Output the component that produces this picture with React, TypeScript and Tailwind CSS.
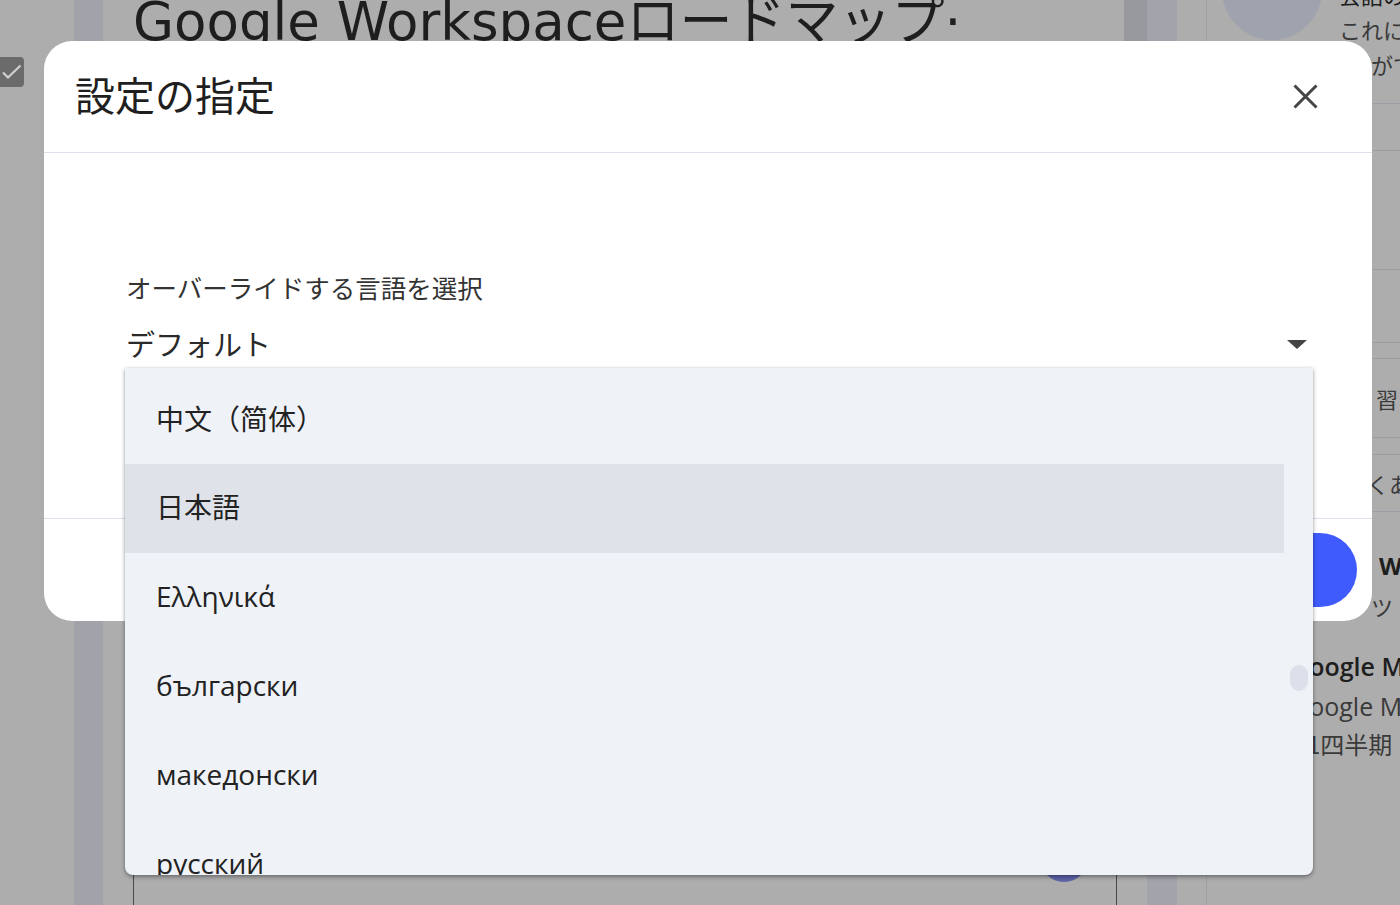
import React from "react";

const jp = "font-['Noto_Sans_CJK_JP','Noto_Sans',sans-serif]";
const item = "font-['Open_Sans','Noto_Sans_CJK_JP',sans-serif]";

const languages = [
  { label: "中文（简体）", sc: true },
  { label: "日本語", active: true },
  { label: "Ελληνικά" },
  { label: "български" },
  { label: "македонски" },
  { label: "русский" },
];

function Backdrop() {
  return (
    <div className="flex h-full w-full bg-[#adadad]">
      {/* checkbox column */}
      <div className="w-[74px] shrink-0">
        <div className="mt-[57px] flex h-[30px] w-[24px] items-center justify-end rounded-r-[4px] bg-[#6b6b6b] pr-[2px]">
          <svg width="20" height="20" viewBox="0 0 20 20" fill="none">
            <path d="M1 10.5l5 5L18.5 3.5" stroke="#cfcfcf" strokeWidth="2.2" />
          </svg>
        </div>
      </div>
      <div className="w-[29px] shrink-0 bg-[#a2a2aa]" />
      <div className="w-[30px] shrink-0" />
      {/* main column */}
      <div className="flex w-[984px] shrink-0 flex-col">
        <div className="mt-[-13px] whitespace-nowrap font-['DejaVu_Sans','Noto_Sans_CJK_JP',sans-serif] text-[53px] font-normal leading-[70px] text-[#1e1e1e]">
          Google Workspaceロードマップ·
        </div>
        <div className="mt-auto h-[180px] border-x border-[#4a4a4a]">
          <div className="ml-[906px] mt-[109px] h-[48px] w-[48px] rounded-full bg-[#5c63a8]" />
        </div>
      </div>
      <div className="w-[7px] shrink-0" />
      <div className="flex w-[23px] shrink-0 flex-col">
        <div className="h-[41px] bg-[#98989f]" />
      </div>
      <div className="w-[30px] shrink-0 bg-[#a3a3ab]" />
      {/* right panel */}
      <div className="flex min-w-0 flex-1">
        <div className="w-[30px] shrink-0 border-r border-[#9f9fa6]" />
        <div className={`flex min-w-0 flex-1 flex-col ${jp} text-[#3a3a3a]`}>
          <div className="flex h-[103px] shrink-0 gap-[17px] pl-[15px]">
            <div className="mt-[-60px] h-[100px] w-[100px] shrink-0 rounded-full bg-[#9fa3ad]" />
            <div className="mt-[-23px] whitespace-nowrap text-[22px] leading-[35px]">
              <div className="text-[#1e1e1e]">会話の</div>
              <div>これに</div>
              <div className="pl-[32px]">がで</div>
            </div>
          </div>
          <div className="h-[48px] shrink-0 border-y border-[#9d9da5]" />
          <div className="h-[119px] shrink-0 border-b border-[#9d9da5]" />
          <div className="h-[73px] shrink-0 border-b border-[#9d9da5]" />
          <div className="h-[16px] shrink-0 border-b border-[#9d9da5]" />
          <div className="flex h-[79px] shrink-0 items-center justify-end border-b border-[#9d9da5] pr-[2px] text-[22px]">
            習
          </div>
          <div className="h-[17px] shrink-0 border-b border-[#9d9da5]" />
          <div className="flex h-[57px] shrink-0 items-center border-b border-[#9d9da5] pl-[160px] text-[22px] whitespace-nowrap">
            くあ
          </div>
          <div className="mt-[38px] whitespace-nowrap pl-[172px] font-['Open_Sans',sans-serif] text-[24px] font-bold leading-[32px] text-[#1e1e1e]">
            W
          </div>
          <div className="mt-[4px] whitespace-nowrap pl-[164px] text-[22px] leading-[40px]">ツ</div>
          <div className="mt-[21px] whitespace-nowrap pl-[84px] font-['Open_Sans',sans-serif] text-[25px] font-semibold leading-[38px] text-[#1e1e1e]">
            Google Meet
          </div>
          <div className="mt-[2px] whitespace-nowrap pl-[84px] font-['Open_Sans',sans-serif] text-[25px] leading-[38px]">
            Google Meet
          </div>
          <div className="whitespace-nowrap pl-[76px] text-[24px] leading-[38px]">第1四半期</div>
        </div>
      </div>
    </div>
  );
}

function Dialog() {
  return (
    <div className="absolute left-[44px] top-[41px] flex h-[580px] w-[1328px] flex-col rounded-[28px] bg-white">
      <div className="flex h-[112px] shrink-0 items-center justify-between border-b border-[#dde1ec] pl-[31px] pr-[54px]">
        <div className={`${jp} mt-[-5px] text-[40px] leading-none text-[#1f1f1f]`}>設定の指定</div>
        <svg width="25" height="25" viewBox="0 0 25 25" fill="none">
          <path d="M1.5 1.5l22 22M23.5 1.5l-22 22" stroke="#454545" strokeWidth="3" />
        </svg>
      </div>
      <div className="flex flex-1 flex-col pl-[82px] pr-[66px] pt-[118px]">
        <div className={`${jp} text-[25.5px] leading-[32px] text-[#333]`}>オーバーライドする言語を選択</div>
        <div className="mt-[22px] flex items-center justify-between">
          <div className={`${jp} text-[29px] leading-[36px] text-[#2a2a2a]`}>デフォルト</div>
          <svg width="20" height="9" viewBox="0 0 20 9" className="mr-[-1px] mt-[2px]">
            <path d="M0 0h20L10 9z" fill="#444" />
          </svg>
        </div>
      </div>
      <div className="flex h-[103px] shrink-0 items-center justify-end border-t border-[#dde1ec] pr-[15px]">
        <div className="h-[74px] w-[160px] rounded-full bg-[#3f5bfd]" />
      </div>
    </div>
  );
}

function Menu() {
  return (
    <div className="absolute left-[125px] top-[368px] flex h-[507px] w-[1188px] overflow-hidden rounded-b-[8px] bg-[#eff2f7] shadow-[0_2px_4px_rgba(0,0,0,0.35),0_0_3px_rgba(0,0,0,0.12)]">
      <div className="flex w-[1159px] flex-col pt-[7px]">
        {languages.map((l) => (
          <div
            key={l.label}
            className={`flex h-[89px] shrink-0 items-center pb-[3px] pl-[31px] text-[28px] text-[#222] ${
              l.sc ? "font-['Noto_Sans_CJK_SC',sans-serif]" : item
            } ${l.active ? "bg-[#dfe2e8]" : ""}`}
          >
            {l.label}
          </div>
        ))}
      </div>
      <div className="flex flex-1 flex-col items-center pt-[297px]">
        <div className="h-[26px] w-[18px] rounded-[9px] bg-[#dce0ea]" />
      </div>
    </div>
  );
}

export default function App() {
  return (
    <div className="relative h-[905px] w-[1400px] overflow-hidden">
      <Backdrop />
      <Dialog />
      <Menu />
    </div>
  );
}
